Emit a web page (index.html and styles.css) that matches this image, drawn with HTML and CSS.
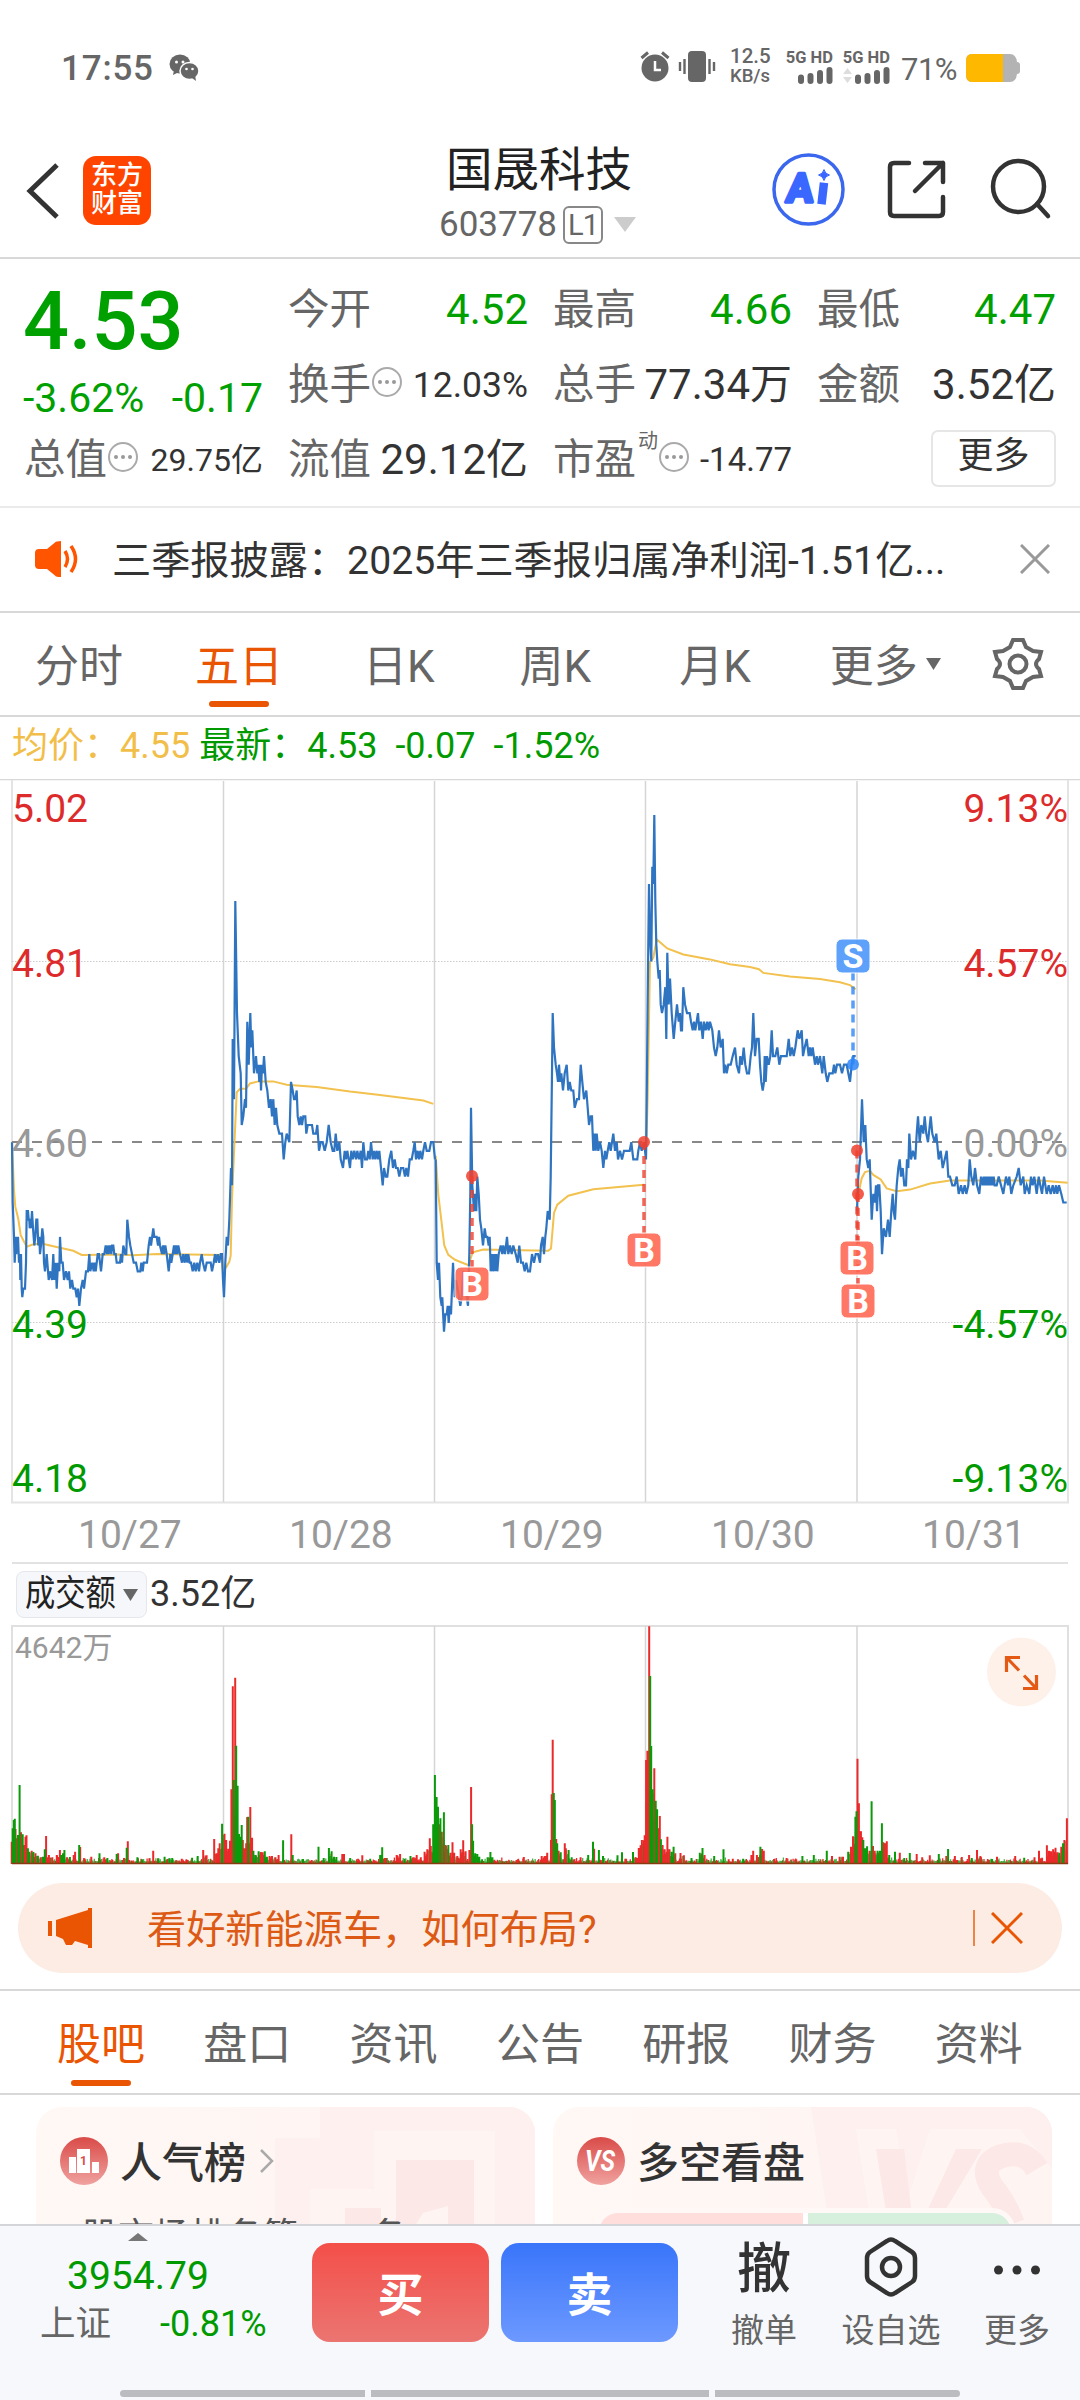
FILE: index.html
```html
<!DOCTYPE html>
<html lang="zh-CN">
<head>
<meta charset="utf-8">
<title>国晟科技 603778</title>
<link rel="stylesheet" href="styles.css">
</head>
<body>
<div class="app">
  <div class="status">
    <span class="clock">17:55</span>
    <svg class="chat" width="30" height="28" viewBox="0 0 30 28"><ellipse cx="11" cy="10" rx="10.5" ry="9.5"/><path d="M5 16l-1 5 6-3z"/><ellipse cx="20.500" cy="17" rx="9.500" ry="8.500" stroke="#fff" stroke-width="1.500"/><path d="M23 24l4 3-1-6z"/><g fill="#fff"><circle cx="7.500" cy="8" r="1.500"/><circle cx="14" cy="8" r="1.500"/><circle cx="17.500" cy="15" r="1.300"/><circle cx="23.500" cy="15" r="1.300"/></g></svg>
    <span class="grow"></span>
    <svg width="76" height="32" viewBox="0 0 76 32" class="alarm"><circle cx="15" cy="17" r="13.500"/><path d="M1.500 7L8 1.500M28.500 7L22 1.500" fill="none" stroke="#666" stroke-width="3"/><path d="M15 10v9h6" fill="none" stroke="#fff" stroke-width="2.500"/><rect x="48" y="0" width="18" height="31" rx="4"/><path d="M44.500 8v15M40 11v9M69.500 8v15M74 11v9" stroke="#666" stroke-width="2.400"/></svg>
    <div class="speed"><span>12.5</span><span>KB/s</span></div>
    <div class="sig"><b>5G HD</b><svg width="36" height="17" viewBox="0 0 36 17"><path d="M4 14v-3.500M13.500 14V9M23 14V6M32.500 14V3" stroke="#666" stroke-width="6" stroke-linecap="round"/></svg></div>
    <div class="sig sig2"><b>5G HD</b><svg width="48" height="17" viewBox="0 0 48 17"><path d="M1 7l4.500-6L10 7zM1 10l4.500 6 4.500-6z" fill="#ddd"/><path d="M16 14v-3.500M25.500 14V9M35 14V6M44.500 14V3" stroke="#666" stroke-width="6" stroke-linecap="round"/></svg></div>
    <span class="pct">71%</span>
    <svg width="55" height="28" viewBox="0 0 55 28"><path d="M7 0h38q6 0 7 8 3 0 3 3v6q0 3-3 3-1 8-7 8H7q-6 0-6-7V7q0-7 6-7z" fill="#b3b3b3"/><path d="M7 0h31v28H7q-6 0-6-7V7q0-7 6-7z" fill="#ffb800"/></svg>
  </div>

  <header class="head">
    <svg class="back" width="34" height="56" viewBox="0 0 34 56"><path d="M31 2L4 28l27 26" fill="none" stroke="#333" stroke-width="5"/></svg>
    <div class="logo"><span>东方</span><span>财富</span></div>
    <div class="title"><h1>国晟科技</h1><div class="code"><span>603778</span><em>L1</em><svg width="22" height="15" viewBox="0 0 22 15"><path d="M0 0h22L11 15z" fill="#ccc"/></svg></div></div>
    <svg class="acts" width="284" height="76" viewBox="770 153 284 76" fill="none">
      <circle cx="808.500" cy="190.500" r="34.500" stroke="#3a67ee" stroke-width="3.500"/>
      <text transform="translate(785.500 203) skewX(-5)" class="ai">A</text><path d="M823.500 188l-1.500 13" stroke="#3a67ff" stroke-width="8.500" stroke-linecap="square"/>
      <path d="M824 170.500q1 4.500 5.500 5.500-4.500 1-5.500 5.500-1-4.500-5.500-5.500 4.500-1 5.500-5.500z" fill="#3a67ff" stroke="#3a67ff"/>
      <g stroke="#333" stroke-width="4.500" stroke-linecap="round" stroke-linejoin="round"><path d="M909 164h-15q-4 0-4 4v45q0 4 4 4h45q4 0 4-4v-15M925 164h18v19M943 164l-28 28"/><circle cx="1018.500" cy="187.500" r="25.500"/><path d="M1037 205l11 12"/></g>
    </svg>
  </header>

  <section class="quote">
    <div class="main"><div class="price">4.53</div><div class="chg"><span>-3.62%</span><span>-0.17</span></div></div>
    <div class="cell"><label>今开</label><b class="g">4.52</b></div>
    <div class="cell"><label>最高</label><b class="g">4.66</b></div>
    <div class="cell"><label>最低</label><b class="g">4.47</b></div>
    <div class="cell"><label>换手</label><i class="tip"></i><b class="s35">12.03%</b></div>
    <div class="cell"><label>总手</label><b>77.34万</b></div>
    <div class="cell"><label>金额</label><b>3.52亿</b></div>
    <div class="cell"><label>总值</label><i class="tip"></i><b class="s32">29.75亿</b></div>
    <div class="cell"><label>流值</label><b>29.12亿</b></div>
    <div class="cell"><label>市盈</label><sup>动</sup><i class="tip"></i><b class="s33">-14.77</b></div>
    <div class="cell"><button class="more">更多</button></div>
  </section>

  <div class="news">
    <svg width="44" height="36" viewBox="0 0 44 36"><path d="M4 8h8L20 1.500Q21 0 26 0v36q-5 0-6-1.500L12 28H4q-4 0-4-4V12q0-4 4-4z" fill="#f50"/><path d="M30 10q5 8 0 16M36 5q9 13 0 26" fill="none" stroke="#f50" stroke-width="3.500"/></svg>
    <p>三季报披露：2025年三季报归属净利润-1.51亿...</p>
    <svg width="30" height="30" viewBox="0 0 30 30"><path d="M1 1l28 28M29 1L1 29" stroke="#999" stroke-width="3"/></svg>
  </div>

  <nav class="periods">
    <span>分时</span><span class="on">五日</span><span>日K</span><span>周K</span><span>月K</span><span>更多</span>
    <svg class="tri" width="15" height="12" viewBox="0 0 15 12"><path d="M0 0h15L7.500 12z" fill="#666"/></svg>
    <svg class="gear" width="52" height="54" viewBox="-26 -27 52 54" fill="none" stroke="#666" stroke-width="4"><path d="M-5-24H5L8-17 15-13 23-12 21-5Q15 0 21 5L23 12 15 13 8 17 5 24H-5L-8 17-15 13-23 12-21 5Q-15 0-21-5L-23-12-15-13-8-17z"/><circle r="8.500"/></svg>
  </nav>

  <div class="legend"><span class="avg">均价：4.55</span><span>最新：4.53</span><span>-0.07</span><span>-1.52%</span></div>

  <svg class="chart" width="1080" height="725" viewBox="0 779 1080 725">
    <path d="M0 779.500H1080" stroke="#d8d8d8" stroke-width="1.500"/>
    <path d="M12 780V1502M1068 780V1502M11 1502.500H1069" stroke="#e4e4e4" stroke-width="2"/>
    <path d="M223.500 781V1502M434.500 781V1502M645.500 781V1502M857 781V1502" stroke="#d5d5d5" stroke-width="1.500"/>
    <path d="M12 961.500H1068M12 1322.500H1068" stroke="#ccc" stroke-dasharray="1.500 1.500"/>
    <path d="M12 1142H1068" stroke="#888" stroke-width="2" stroke-dasharray="10 10"/>
    <g class="axis r"><text x="12" y="822">5.02</text><text x="12" y="977">4.81</text><text x="1068" y="822" class="e">9.13%</text><text x="1068" y="977" class="e">4.57%</text></g>
    <g class="axis n"><text x="12" y="1157">4.60</text><text x="1068" y="1157" class="e">0.00%</text></g>
    <g class="axis dn"><text x="12" y="1338">4.39</text><text x="12" y="1492">4.18</text><text x="1068" y="1338" class="e">-4.57%</text><text x="1068" y="1492" class="e">-9.13%</text></g>
    <path id="avg" fill="none" stroke="#f2c14e" stroke-width="2"/>
    <path id="line" fill="none" stroke="#2f74c0" stroke-width="2.200"/>
    <g id="marks"></g>
  </svg>
  <div class="dates"><span>10/27</span><span>10/28</span><span>10/29</span><span>10/30</span><span>10/31</span></div>
  <div class="turn"><div class="pick"><span>成交额</span><svg width="15" height="12" viewBox="0 0 15 12"><path d="M0 0h15L7.500 12z" fill="#666"/></svg></div><b>3.52亿</b></div>
  <svg class="vol" width="1080" height="240" viewBox="0 1625 1080 240">
    <path d="M12 1864V1626H1068V1864" fill="none" stroke="#e0e0e0" stroke-width="2"/>
    <path d="M223.500 1626V1864M434.500 1626V1864M645.500 1626V1864M857 1626V1864" stroke="#d5d5d5" stroke-width="1.500"/>
    <text x="15" y="1658" class="cap">4642万</text>
    <g id="bars"></g>
    <circle cx="1021.500" cy="1672" r="34.500" fill="#fef1ea"/>
    <path d="M1006.500 1672v-14.500H1020M1008 1659l11 11.500M1036.500 1675v13.500H1023M1035 1687l-11-11.500" fill="none" stroke="#e45a14" stroke-width="3.200"/>
  </svg>

  <div class="promo">
    <svg width="46" height="40" viewBox="0 0 46 40" fill="#ea5504"><path d="M1 13h4v15H1zM9 12L41 2V0h4v40h-4v-3l-13-4-3 4h-6l-3-6-7-3z"/></svg>
    <p>看好新能源车，如何布局?</p><i></i>
    <svg width="32" height="32" viewBox="0 0 32 32"><path d="M1 1l30 30M31 1L1 31" stroke="#ea5504" stroke-width="3"/></svg>
  </div>

  <nav class="tabs"><span class="on">股吧</span><span>盘口</span><span>资讯</span><span>公告</span><span>研报</span><span>财务</span><span>资料</span></nav>

  <div class="cards">
    <section class="card">
      <svg class="deco" width="260" height="117" viewBox="0 0 260 117"><path d="M0 31h45V0h215v117H0z" fill="#fdf0ee"/><path d="M35 82h64V24h121v93H35z" fill="#fef5f3"/><path d="M70 101h36v16H70zM121 53h78v64h-26v-18l-25 7-7 11h-20z" fill="#fce8e6"/></svg>
      <div class="ct"><svg width="48" height="48" viewBox="0 0 48 48"><defs><linearGradient id="ic" x2="0" y2="1"><stop stop-color="#d94b48"/><stop offset="1" stop-color="#f0a29f"/></linearGradient></defs><circle cx="24" cy="24" r="24" fill="url(#ic)"/><path d="M9 20h7v16H9zM17 12h13v24H17zM32 25h7v11h-7z" fill="#fff"/><text x="23.500" y="28" text-anchor="middle" font-size="12" fill="#d94b48" font-weight="700">1</text></svg><h2>人气榜</h2><svg class="chev" width="14" height="24" viewBox="0 0 14 24"><path d="M1 1l11 11L1 23" fill="none" stroke="#aaa" stroke-width="2.500"/></svg></div>
      <p class="rank"><span>股市场排名第</span><span>名</span></p>
    </section>
    <section class="card">
      <svg class="deco" width="241" height="117" viewBox="0 0 241 117"><path d="M0 0h241v117H18z" fill="#fdf0ee"/><path d="M45 22h40l12 70 22-70h90l32 40v55H60z" fill="#fef5f3"/><path d="M65 42h28l9 75H77zM110 117l35-75h26l-45 75z" fill="#fce8e6"/><path d="M226 62q-12-20-35-13-24 8-10 31 12 14 21 37" fill="none" stroke="#fce8e6" stroke-width="24"/></svg>
      <div class="ct"><svg width="48" height="48" viewBox="0 0 48 48"><circle cx="24" cy="24" r="24" fill="url(#ic)"/><text x="23" y="34" text-anchor="middle" textLength="30" lengthAdjust="spacingAndGlyphs" font-size="29" font-style="italic" font-weight="700" fill="#fff">VS</text></svg><h2>多空看盘</h2></div>
      <div class="bull"><i></i><i></i></div>
    </section>
  </div>

  <footer class="foot">
    <div class="bar">
      <div class="idx"><svg width="20" height="8" viewBox="0 0 20 8"><path d="M0 8h20L10 0z" fill="#777"/></svg><b>3954.79</b><div><span>上证</span><em>-0.81%</em></div></div>
      <button class="buy">买</button><button class="sell">卖</button>
      <div class="act a1"><strong>撤</strong><span>撤单</span></div>
      <div class="act a2"><svg width="54" height="60" viewBox="-27 -30 54 60" fill="none" stroke="#333" stroke-width="4.500"><path d="M-4-26Q0-29 4-26L21-15Q24-13 24-9V9Q24 13 21 15L4 26Q0 29-4 26L-21 15Q-24 13-24 9V-9Q-24-13-21-15z"/><circle r="9"/></svg><span>设自选</span></div>
      <div class="act a3"><svg width="54" height="60" viewBox="-27 -30 54 60" fill="#333"><circle cx="-18.500" cy="3" r="4.500"/><circle cy="3" r="4.500"/><circle cx="18.500" cy="3" r="4.500"/></svg><span>更多</span></div>
    </div>
    <div class="home"><i></i><i></i><i></i></div>
  </footer>
</div>
<script src="chart.js"></script>
</body>
</html>
```

FILE: styles.css
```css
* { box-sizing: border-box; margin: 0; padding: 0; }
body { font-family: Roboto, "Noto Sans CJK SC", sans-serif; color: #333; background: #fff; }
.app { width: 1080px; height: 2400px; overflow: hidden; display: flex; flex-direction: column; }
.app > * { flex: none; }
b, em, i, h1 { font-weight: 400; font-style: normal; }
button { border: 0; font-family: inherit; }
svg { display: block; flex: none; }
.grow { flex: 1; }

.status { height: 134px; padding: 2px 60px 0 61px; display: flex; align-items: center; color: #666; }
.clock { font-size: 35px; letter-spacing: .8px; font-weight: 500; }
.chat { margin-left: 15px; fill: #666; }
.alarm { margin: -2px 14px 0 0; fill: #666; }
.speed { width: 42px; margin-top: -4px; display: flex; flex-direction: column; font-size: 20.500px; line-height: 20px; font-weight: 500; white-space: nowrap; }
.speed span + span { font-size: 18.500px; }
.sig { margin: -4px 0 0 13px; width: 48px; display: flex; flex-direction: column; align-items: flex-end; line-height: 18px; white-space: nowrap; }
.sig2 { margin-left: 9px; }
.sig b { font-weight: 700; font-size: 16.500px; }
.pct { margin: 4px 8px 0 11px; font-size: 31px; line-height: 36px; width: 56px; letter-spacing: -.5px; }

.head { height: 125px; border-bottom: 2px solid #d8d8d8; padding: 0 26px 0 26px; display: flex; align-items: center; position: relative; }
.back { margin-top: -10px; }
.logo { margin: -11px 0 0 23px; width: 68px; height: 69px; background: #ff4400; border-radius: 13px; color: #fff; font-weight: 500; font-size: 26px; line-height: 28px; padding-top: 5px; text-align: center; display: flex; flex-direction: column; }
.title { margin-left: 276px; width: 224px; text-align: center; }
.title h1 { font-size: 46.500px; line-height: 60px; color: #222; margin-top: -3px; }
.code { display: flex; align-items: center; height: 48px; margin-left: 12px; font-size: 35px; color: #666; }
.code em { margin: 1px 11px 0 6px; width: 40px; height: 38px; border: 2px solid #888; border-radius: 6px; font-size: 29px; line-height: 34px; letter-spacing: -1px; text-align: center; }
.acts { margin: -12px 0 0 auto; }
.ai { font: 700 40px Roboto; fill: #3a67ff; stroke: #3a67ff; stroke-width: 3.500px; stroke-linejoin: round; }

.quote { height: 249px; border-bottom: 2px solid #ebebeb; padding: 13px 24px 0; display: grid; grid-template-columns: 239px 240px 239px 239px; grid-template-rows: repeat(3, 75px); column-gap: 25px; }
.main { grid-row: span 2; color: #00a000; }
.price { font-size: 81px; line-height: 99px; font-weight: 500; margin-left: -1px; }
.chg { display: flex; justify-content: space-between; font-size: 41px; line-height: 54px; margin-left: -1px; }
.cell { display: flex; align-items: center; font-size: 41.500px; line-height: 60px; white-space: nowrap; position: relative; }
.cell label { color: #666; }
.cell b { margin-left: auto; font-size: 42px; }
.cell .g { color: #00a000; }
.cell .s35 { font-size: 35.500px; }
.cell .s32 { font-size: 32px; }
.cell .s33 { font-size: 33px; }
.cell sup { font-size: 20px; line-height: 20px; color: #666; margin: -38px 0 0 2px; }
.tip { width: 30px; height: 30px; margin: -6px 0 0 1px; border: 2px solid #aaa; border-radius: 50%; display: flex; align-items: center; justify-content: center; }
.tip::before { content: ""; width: 4px; height: 4px; border-radius: 50%; background: #999; box-shadow: -7px 0 #999, 7px 0 #999; }
.more { margin-left: auto; width: 125px; height: 57px; margin-top: -3px; border: 2px solid #e6e6e6; border-radius: 7px; background: #fff; color: #333; font-size: 36px; line-height: 46px; padding-bottom: 4px; }

.news { height: 105px; border-bottom: 2px solid #d8d8d8; padding: 0 30px 0 35px; display: flex; align-items: center; }
.news svg { margin-top: -1px; }
.news p { flex: 1; margin: -5px 0 0 33px; font-size: 39.200px; white-space: nowrap; }

.periods { height: 104px; border-bottom: 2px solid #d8d8d8; padding: 0 36px 0 35px; display: flex; align-items: center; font-size: 44px; line-height: 100px; color: #666; }
.periods span { position: relative; padding-top: 4px; height: 102px; }
.periods span + span { margin-left: 72px; }
.periods span:nth-child(3) { margin-left: 80px; }
.periods span:nth-child(4) { margin-left: 85px; }
.periods span:nth-child(5) { margin-left: 88px; }
.periods span:nth-child(6) { margin-left: 79px; }
.on { color: #ea5504; position: relative; }
.on::after { content: ""; position: absolute; left: 14px; bottom: 8px; width: 60px; height: 6px; border-radius: 3px; background: #ea5504; }
.periods .tri { margin-left: 8px; }
.periods .gear { margin-left: auto; }

.legend { height: 62px; padding-left: 12px; display: flex; align-items: baseline; font-size: 36px; line-height: 58px; color: #009a00; white-space: nowrap; }
.legend span { margin-left: 18px; }
.legend .avg { margin: 0 -9px 0 0; color: #f2be4a; }
.axis { font-size: 39px; }
.axis .e { text-anchor: end; }
.r { fill: #dd2b2b; }
.n { fill: #999; }
.dn { fill: #009a00; }
.mk { font-size: 34px; font-weight: 700; fill: #fff; text-anchor: middle; }
.dates { height: 60px; margin: 0 12px; padding: 4px 0 0 66px; border-bottom: 2px solid #e2e2e2; display: grid; grid-template-columns: repeat(5, 211px); align-items: center; font-size: 39px; color: #999; width: 1056px; }
.turn { height: 61px; padding: 7px 0 0 16px; display: flex; align-items: flex-start; font-size: 36px; line-height: 47px; }
.pick { width: 131px; height: 47px; border: 1px solid #e6e7ec; border-radius: 8px; background: #f6f7fb; display: flex; align-items: center; color: #222; }
.pick span { margin-left: 8px; width: 98px; flex: none; white-space: nowrap; transform: scaleX(.84); transform-origin: 0 50%; }
.turn b { margin-left: 3px; }
.cap { font-size: 30px; fill: #999; }

.promo { margin: 18px 18px 16px; height: 90px; padding: 0 39px 0 29px; border-radius: 45px; background: #fcece3; display: flex; align-items: center; color: #dc5a14; }
.promo p { margin: -5px 0 0 54px; flex: 1; font-size: 39.200px; }
.promo i { width: 2px; height: 36px; background: #ea5504; margin-right: 16px; opacity: .7; }

.tabs { height: 106px; border-top: 2px solid #d8d8d8; border-bottom: 2px solid #d8d8d8; padding-left: 57px; display: flex; gap: 58.300px; font-size: 44px; line-height: 108px; color: #666; }
.tabs .on::after { bottom: auto; top: 89px; }
.cards { height: 129px; padding: 12px 28px 0 36px; display: flex; gap: 18px; overflow: hidden; }
.card { width: 499px; height: 150px; border-radius: 26px; background: linear-gradient(90deg, #fff8f5, #fef4f2); position: relative; overflow: hidden; }
.deco { position: absolute; top: 0; right: 0; }
.ct { position: relative; display: flex; align-items: center; height: 60px; margin: 24px 0 0 24px; }
.ct h2 { font-size: 42px; font-weight: 500; line-height: 60px; margin: 6px 0 0 12px; }
.chev { margin-left: 14px; }
.rank { display: flex; gap: 72px; margin: 20px 0 0 46px; font-size: 36px; line-height: 53px; color: #555; white-space: nowrap; position: relative; }
.bull { position: relative; display: flex; gap: 5px; margin: 17px 36px 0 41px; height: 50px; border: 5px solid #fff8f6; border-radius: 24px; background: #fff; overflow: hidden; }
.bull i { flex: 1; background: #ffdedb; }
.bull i + i { background: #d7efdd; }

.foot { height: 177px; background: #f6f8fb; border-top: 2px solid #d3d5d9; position: relative; }
.bar { display: flex; height: 140px; padding-left: 40px; align-items: flex-start; }
.idx { width: 272px; padding-top: 7px; }
.idx svg { margin-left: 88px; }
.idx b { display: block; margin: 10px 0 0 27px; font-size: 39px; line-height: 50px; color: #009a00; }
.idx div { display: flex; font-size: 35.500px; line-height: 47px; color: #666; }
.idx em { margin-left: 49px; color: #009a00; font-size: 36px; }
.buy, .sell { margin-top: 17px; width: 177px; height: 99px; border-radius: 18px; color: #fff; font-size: 46px; line-height: 99px; padding-top: 3px; font-weight: 700; background: linear-gradient(#f44f49, #eb7571); }
.sell { margin-left: 12px; background: linear-gradient(#3975fa, #6d99ff); }
.act { display: flex; flex-direction: column; align-items: center; width: 110px; padding-top: 11px; font-size: 33px; line-height: 40px; color: #666; white-space: nowrap; }
.act strong { font-size: 54px; line-height: 66px; height: 60px; font-weight: 500; color: #333; }
.act span { margin-top: 14px; }
.a1 { margin-left: 31px; }
.a2 { margin-left: 17px; }
.a3 { margin-left: 16px; }
.home { display: flex; gap: 6px; margin: 24px 0 0 120px; }
.home i { height: 7px; width: 245px; background: #bbbcbf; border-radius: 4px 0 0 4px; }
.home i:nth-child(2) { width: 338px; border-radius: 0; }
.home i:nth-child(3) { border-radius: 0 4px 4px 0; }
```

FILE: chart.js
```js
// Price samples: x in thirds of a pixel from the origin, value in cents from the 4.60 close.
const days = [
  [0, `36,0 38,-7 42,-11 44,-14 47,-11 49,-13 50,-11 52,-12 54,-11 57,-14 60,-13 61,-16 63,-13 65,-17 67,-18 70,-17 75,-17 78,-14 80,-8 84,-8 86,-9 88,-9 89,-10 92,-9 93,-10 96,-8 99,-10 103,-12 106,-11 109,-9 112,-9 115,-12 118,-11 120,-13 123,-12 127,-10 130,-11 132,-14 135,-15 140,-13 146,-16 150,-15 156,-16 160,-13 163,-16 167,-14 170,-17 174,-14 178,-15 180,-11 184,-14 188,-14 192,-16 198,-15 203,-16 207,-15 211,-17 216,-16 220,-17 226,-17 230,-18 234,-17 238,-19 243,-17 248,-16 252,-17 258,-15 264,-15 268,-13 271,-15 277,-14 281,-15 284,-14 287,-15 293,-13 297,-13 303,-15 308,-13 313,-13 317,-12 321,-13 323,-12 326,-13 330,-12 334,-13 336,-12 340,-12 343,-13 347,-13 350,-14 360,-14 363,-13 366,-14 370,-12 376,-13 379,-13 382,-9 387,-11 391,-12 396,-13 401,-14 408,-14 413,-15 421,-15 424,-14 428,-15 431,-14 441,-14 446,-12 450,-11 453,-12 460,-10 463,-11 470,-11 474,-12 477,-11 480,-12 486,-13 489,-12 492,-13 496,-12 500,-13 506,-15 511,-13 514,-14 518,-13 522,-12 525,-13 528,-12 532,-13 535,-12 540,-13 546,-14 550,-13 554,-14 558,-13 562,-14 565,-13 569,-14 573,-14 578,-15 583,-14 587,-15 592,-14 597,-15 600,-14 605,-13 609,-14 615,-15 620,-14 632,-14 636,-15 641,-14 645,-13 648,-14 653,-13 658,-14 662,-13 666,-13 669,-16 672,-18 676,-14 680,-11 684,-12 688,-9 693,-3 696,-5 698,12 702,5 706,28 711,15 716,10 722,8 725,2 730,3 735,5 738,4 742,14 746,9 751,15 754,11 757,13 762,8 768,10 772,8 775,9 778,7 781,9 783,6 786,9 789,8 792,10 797,7 802,6 807,4 812,5 816,3 820,5 824,2 828,4 832,2 838,1 846,1 851,-2 856,0 860,1 868,0 873,7 878,6 882,5 886,5 890,6 893,3 898,2 902,3 906,2 910,3 916,3 919,1 923,2 936,2 940,1 948,1 952,2 957,-1 962,0 968,0 974,-1 980,0 986,2 992,0 998,-1 1003,-1 1007,1 1012,-1 1018,0 1022,-2 1029,-3 1034,-1 1038,-2 1042,-1 1046,-2 1050,-3 1054,-1 1058,-2 1063,-1 1068,-2 1072,-1 1077,-2 1082,-1 1086,-3 1090,0 1095,-2 1101,-2 1105,-1 1109,-2 1113,0 1118,-2 1122,-1 1126,-2 1130,-1 1134,-2 1138,-1 1143,-3 1148,-5 1152,-3 1157,-4 1162,-4 1168,-2 1174,-1 1179,-3 1184,-2 1188,-3 1193,-3 1198,-4 1203,-3 1210,-3 1215,-4 1219,-3 1224,-4 1229,-2 1235,-2 1240,-1 1244,0 1248,-2 1253,-1 1257,-2 1261,-1 1266,-2 1270,-1 1275,0 1280,-1 1288,-1 1293,0 1300,0 1305,-2`],
  [420, `47,-2 50,-14 54,-16 57,-14 61,-18 65,-19 67,-18 72,-22 76,-20 80,-20 83,-19 86,-21 89,-19 93,-20 96,-17 99,-14 104,-18 108,-16 113,-17 117,-18 121,-19 125,-18 130,-15 134,-17 140,-18 144,-19 148,-13 151,-6 153,4 157,-5 162,-8 165,-6 169,-8 172,-4 176,-6 180,-9 184,-10 189,-12 194,-10 198,-11 202,-11 206,-12 209,-11 212,-15 216,-13 219,-15 223,-13 226,-15 229,-13 232,-15 236,-13 242,-12 247,-13 250,-12 255,-13 261,-11 265,-13 270,-12 275,-13 280,-12 287,-13 293,-14 298,-12 303,-14 309,-14 314,-15 319,-14 324,-15 330,-15 336,-13 342,-14 347,-13 354,-13 360,-14 363,-12 368,-11 372,-13 376,-11 379,-10 383,-8 389,-9 392,-4 396,8 398,15 402,11 407,9 411,8 414,7 417,9 421,7 424,8 429,6 434,8 440,9 445,6 449,7 454,6 460,6 464,4 471,5 477,5 482,9 487,7 492,5 499,6 503,4 507,2 512,3 516,3 520,-1 524,1 527,-1 530,1 535,-1 540,0 545,-1 550,-3 555,-1 559,-2 563,-1 568,0 572,-1 580,1 585,-1 590,0 594,-2 600,-1 606,-2 612,-1 629,-1 634,0 637,-1 640,-2 652,-2 655,-1 660,0 665,-1 672,0 678,-2 680,5 684,20 687,30 690,24 694,21 697,32 700,30 703,38 706,28 709,23 712,21 716,19 719,20 722,16 726,15 731,16 736,18 739,12 742,22 746,16 750,19 755,15 761,12 766,14 771,16 776,14 780,15 783,13 786,13 790,18 795,16 801,15 809,15 813,14 818,13 822,14 826,13 834,15 838,13 843,14 848,12 852,14 857,13 862,14 866,13 870,14 877,13 882,11 887,10 892,11 897,13 902,11 908,12 912,8 916,9 920,8 925,9 932,9 938,10 945,11 950,9 957,8 961,10 966,9 971,11 976,9 981,8 987,8 992,10 996,11 1000,15 1005,10 1010,12 1016,12 1020,9 1024,7 1028,6 1032,7 1034,10 1037,7 1041,10 1046,9 1051,10 1055,13 1059,10 1066,10 1072,11 1078,9 1083,10 1100,10 1106,12 1111,10 1116,11 1121,10 1126,11 1133,13 1138,12 1145,13 1149,10 1154,11 1160,12 1166,10 1170,11 1174,10 1178,11 1185,9 1190,10 1194,9 1200,10 1207,8 1211,10 1217,8 1222,7 1228,8 1238,8 1242,9 1246,8 1251,9 1260,9 1266,8 1272,9 1280,9 1285,8 1290,7 1295,9 1300,10 1307,10`],
  [640, `651,-8 655,-4 660,-2 666,5 671,0 676,2 680,-2 685,-3 689,-2 695,-9 700,-6 704,-7 708,-5 711,-8 714,-5 718,-5 722,-8 726,-13 731,-10 738,-11 744,-9 749,-11 754,-8 758,-6 761,-8 765,-9 770,-5 775,-3 779,-2 783,-4 788,-3 793,-5 798,-5 801,-2 805,-3 808,1 813,-2 819,-1 826,-2 830,1 834,3 839,0 844,2 850,1 854,3 859,1 864,0 872,3 877,1 884,0 889,1 896,-2 902,-1 908,-3 914,-2 920,-1 925,-4 930,-4 937,-5 944,-5 950,-4 956,-6 963,-5 968,-6 974,-5 979,-6 985,-5 989,-2 994,-4 1000,-5 1005,-3 1011,-5 1018,-6 1023,-4 1028,-5 1031,-4 1034,-5 1037,-4 1040,-5 1043,-4 1046,-5 1049,-4 1052,-5 1055,-4 1058,-5 1061,-4 1064,-5 1070,-5 1076,-4 1083,-5 1090,-6 1098,-4 1104,-5 1108,-4 1114,-6 1120,-5 1130,-4 1136,-3 1142,-5 1150,-4 1154,-6 1160,-5 1168,-6 1173,-4 1178,-5 1183,-4 1190,-6 1196,-4 1201,-5 1206,-6 1212,-4 1220,-6 1226,-5 1232,-6 1238,-5 1243,-6 1248,-5 1252,-6 1257,-5 1264,-6 1270,-7 1280,-7`]
];
// Average price: x in thirds of a pixel, y in plot units of 1/2.45 px below 770.
const averages = [
  [0, `36,912 42,1030 46,1070 55,1100 62,1140 80,1168 100,1162 125,1160 160,1167 220,1178 245,1188 360,1187 400,1189 470,1186 666,1188 669,1230 676,1222 688,1205 692,1190 696,1050 704,900 710,790 720,781 738,781 750,768 775,763 820,763 860,771 950,777 1050,788 1140,796 1270,810 1300,818`],
  [420, `47,945 55,1040 73,1165 85,1188 105,1200 145,1213 158,1182 190,1175 385,1178 393,1172 402,1085 412,1065 445,1043 520,1027 672,1016`],
  [420, `678,950 683,800 690,470 700,460 710,415 742,437 790,452 870,464 930,476 990,483 1017,488 1030,497 1110,506 1200,512 1260,520 1290,527 1307,537`],
  [640, `655,1040 665,1000 675,985 690,982 700,992 722,1003 740,1025 770,1032 810,1028 870,1013 930,1006 1200,1006 1283,1011`]
];
const trace = (sets, toY) => sets.map(([o, s]) => "M" + s.split(" ").map(p => {
  const [x, v] = p.split(",").map(Number);
  return (o + x / 3).toFixed(1) + " " + toY(v).toFixed(1);
}).join("L")).join("");
document.getElementById("line").setAttribute("d", trace(days, c => 1142.2 - c * 8.61));
document.getElementById("avg").setAttribute("d", trace(averages, v => 770 + v / 2.45));

// Trade markers: letter, x, dot y, label y.
document.getElementById("marks").innerHTML = [
  ["B", 472, 1176, 1284], ["B", 644, 1142, 1250], ["S", 853, 1064.5, 956], ["B", 858, 1194, 1301], ["B", 857, 1150.5, 1258]
].map(([t, x, y, ly]) => {
  const sell = t === "S", c = sell ? "#2e86f7" : "#f0402e", f = sell ? "#4895fb" : "#ff6650";
  return `<path d="M${x} ${y}V${ly + (sell ? 17 : -17)}" stroke="${c}" stroke-width="3.5" stroke-dasharray="8 6" opacity=".8"/>
  <circle cx="${x}" cy="${y}" r="6" fill="${c}" opacity=".85"/>
  <rect x="${x - 17}" y="${ly - 17}" width="34" height="34" rx="6" fill="${f}" stroke="#fff" opacity=".88"/>
  <text class="mk" x="${x}" y="${ly + 12}">${t}</text>`;
}).join("");

// Turnover bars: colour, x and top edge.
const volume = [
  [0, `r34,695 g37,655 g40,630 g43,626 r45,657 r48,685 g52,675 g57,525 r61,667 g66,673 r69,705 r74,680 r77,676 g81,715 g85,725 r92,722 g97,726 r103,730 g110,737 r118,742 g125,740 g130,718 r134,678 r142,735 r152,742 r165,735 r174,720 g178,735 g183,730 g187,720 r195,742 g203,741 r214,735 r218,725 g230,705 r233,711 r245,745 r265,740 g289,730 r303,742 g312,744 g339,732 r343,730 r360,744 g368,713 r371,694 g399,742 g412,748 r434,745 r445,722 g460,745 g478,740 g492,745 g500,744 r528,746 r545,750 g558,743 g574,738 r590,720 r600,736 r622,687 r629,730 r634,715 r638,700 g645,641 r652,671 r657,690 r663,716 r668,692 r672,538 r676,229 g679,510 r683,203 g686,407 g690,527 g694,672 g698,680 g702,645 r705,690 r711,715 r715,700 r718,621 g721,620 r724,700 r727,591 r732,683 g736,722 g742,735 g751,724 r757,726 r763,727 g769,724 g775,740 r783,738 r790,738 r800,742 r809,735 g822,691 r846,673 g850,735 g880,747 r905,750 g925,710 g940,744 g955,714 g963,724 g970,740 g977,741 r994,732 r999,732 g1017,744 r1040,746 r1052,736 g1075,746 g1104,735 g1110,712 r1118,744 r1152,735 r1162,732 g1175,746 g1192,738 r1200,742 r1210,735 r1222,742 r1233,725 r1241,718 r1248,685 r1251,708 g1258,643 g1263,495 g1268,561 g1272,590 r1275,643 g1279,625 r1283,665 g1289,607 r1294,705 g1302,705 r1308,728 r1314,697 r1319,728 r1328,738 r1338,718 r1345,691 r1352,724 r1363,720 r1368,531 g1371,643 g1374,692 g1380,730 g1386,732 g1392,740 g1400,748 g1416,742 g1424,726 g1430,742 r1500,750 r1521,741`],
  [540, `r5,738 r15,738 r21,728 r32,690 r34,553 r37,389 g40,549 g43,570 r47,687 g50,700 r54,722 g60,727 r72,700 r75,715 g83,720 g92,742 r118,742 g140,735 g154,695 r157,716 g171,720 g183,738 g225,736 g238,727 r250,746 g270,726 r278,742 r287,714 r292,706 r296,690 r304,676 r308,450 r312,422 r317,49 g320,198 g323,408 g327,538 r332,475 g336,572 g340,598 r344,655 r348,618 g351,688 r356,705 r362,718 r370,680 r376,718 g382,725 g388,710 r393,730 r408,729 r418,736 g440,744 g464,728 g472,714 r478,735 g506,738 g533,718 r548,748 r560,746 r575,748 g590,746 r614,735 r619,722 r630,735 g640,710 r645,717 r650,722 r680,747 r716,744 g762,738 g795,735 g833,722 r848,738 r870,740 r880,740 g895,725 r903,710 r909,679 g916,620 g919,604 r922,446 r926,580 r932,664 r936,682 g939,690 g944,715 g950,709 r957,722 g963,574 r967,708 r972,722 g980,722 g987,722 g993,640 r997,697 r1001,700 r1007,694 g1014,735 g1031,725 r1045,728 g1058,744 g1074,729 r1094,732 r1110,742 r1132,736 g1158,732 r1180,738 g1185,717 r1205,738 r1225,741 r1246,735 g1254,744 r1269,720 r1279,738 g1313,747 r1327,740 r1380,738 g1406,743 r1436,742 r1449,722 r1458,743 r1472,706 r1478,722 r1484,724 r1490,718 r1497,713 r1503,727 g1508,728 r1514,710 g1519,700 r1523,690 r1530,625`]
];
const keys = volume.flatMap(([o, s]) => s.split(" ").map(k => {
  const [x, y] = k.slice(1).split(",").map(Number);
  return [k[0], o + x / 2.904, (762 - y) / 3];
}));
const paths = { r: "", g: "" };
const add = (c, x, h) => { paths[c] += `M${x.toFixed(1)} 1864v-${h.toFixed(1)}`; };
let seed = 11;
const rnd = () => (seed = (seed * 16807) % 2147483647) / 2147483647;
for (let x = 12.5, i = 0; x < 1067; x += 0.88) {
  while (i < keys.length - 2 && keys[i + 1][1] < x) i++;
  const a = keys[i], b = keys[i + 1], near = b[1] - a[1] < 3.6;
  const low = Math.min(a[2], b[2]);
  add(rnd() < 0.55 ? "r" : "g", x, near ? low * (0.55 + rnd() * 0.45) : 2.4 + rnd() * rnd() * 4.5);
}
const back = { ...paths };
paths.r = paths.g = "";
keys.forEach(k => add(...k));
document.getElementById("bars").innerHTML =
  [["#ea2a2a", back.r], ["#0a9a0a", back.g], ["#ea2a2a", paths.r], ["#0a9a0a", paths.g]]
    .map(([c, d], i) => `<path d="${d}" stroke="${c}" stroke-width="${i < 2 ? 1.3 : 2}" ${i === 1 ? 'opacity=".75"' : ""}/>`).join("") +
  '<path d="M12 1863.5H1068" stroke="#8a3a10" stroke-width="1.5"/>';
```
